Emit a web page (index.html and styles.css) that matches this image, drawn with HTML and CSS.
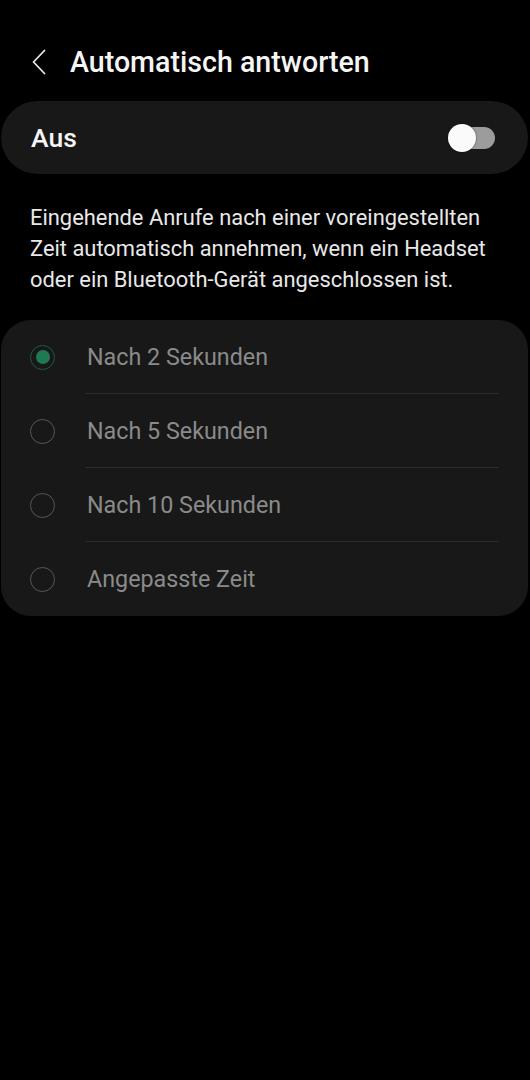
FILE: index.html
```html
<!DOCTYPE html>
<html lang="de">
<head>
<meta charset="utf-8">
<title>Automatisch antworten</title>
<link rel="stylesheet" href="styles.css">
</head>
<body>
<header class="appbar">
  <span class="back" aria-label="Zurück">
    <svg width="14" height="26" viewBox="0 0 14 26"><path d="M12.5 1.5 L1.5 13 L12.5 24.5" fill="none" stroke="#e6e6e6" stroke-width="1.8" stroke-linecap="round" stroke-linejoin="round"/></svg>
  </span>
  <h1 class="title">Automatisch antworten</h1>
</header>

<section class="switch-card">
  <span class="switch-label">Aus</span>
  <span class="toggle"><span class="knob"></span></span>
</section>

<p class="desc">Eingehende Anrufe nach einer voreingestellten Zeit automatisch annehmen, wenn ein Headset oder ein Bluetooth-Gerät angeschlossen ist.</p>

<section class="options">
  <div class="option">
    <span class="radio checked"><span class="dot"></span></span>
    <span class="opt-label">Nach 2 Sekunden</span>
  </div>
  <div class="option">
    <span class="radio"></span>
    <span class="opt-label">Nach 5 Sekunden</span>
  </div>
  <div class="option">
    <span class="radio"></span>
    <span class="opt-label">Nach 10 Sekunden</span>
  </div>
  <div class="option last">
    <span class="radio"></span>
    <span class="opt-label">Angepasste Zeit</span>
  </div>
</section>
</body>
</html>
```
FILE: styles.css
```css
* { box-sizing: border-box; }
html, body { margin: 0; padding: 0; background: #000; }
body {
  font-family: Roboto, "Noto Sans", "Liberation Sans", sans-serif;
  color: #f2f2f2;
  width: 530px;
  min-height: 1080px;
}
.appbar {
  display: flex;
  align-items: center;
  height: 76px;
  margin-top: 24px;
  padding-left: 32px;
}
.back { display: flex; width: 14px; height: 26px; }
.title {
  margin: 0 0 0 24px;
  font-size: 28.6px;
  font-weight: 500;
  color: #f5f5f5;
  letter-spacing: 0;
}
.switch-card {
  display: flex;
  align-items: center;
  justify-content: space-between;
  height: 73px;
  margin: 1px 2px 0 1px;
  padding: 0 33px 0 30px;
  background: #181818;
  border-radius: 37px;
}
.switch-label {
  font-size: 26.5px;
  font-weight: 500;
  color: #f5f5f5;
}
.toggle {
  position: relative;
  width: 46px;
  height: 22px;
  border-radius: 11px;
  background: #9c9c9c;
}
.knob {
  position: absolute;
  left: -1px;
  top: -3px;
  width: 28px;
  height: 28px;
  border-radius: 50%;
  background: #fafafa;
  box-shadow: 0 0 2px rgba(0,0,0,0.6);
}
.desc {
  margin: 28px 0 0;
  padding: 0 30px;
  font-size: 21.9px;
  line-height: 31px;
  color: #e8e8e8;
}
.options {
  margin: 25px 2px 0 1px;
  background: #181818;
  border-radius: 30px;
}
.option {
  display: flex;
  align-items: center;
  height: 74px;
}
.radio {
  display: flex;
  align-items: center;
  justify-content: center;
  flex: none;
  width: 25px;
  height: 25px;
  margin-left: 29px;
  border: 1.5px solid #575757;
  border-radius: 50%;
}
.radio.checked { border-color: #1e5a3f; }
.dot {
  width: 14px;
  height: 14px;
  border-radius: 50%;
  background: #1f7a53;
}
.opt-label {
  display: flex;
  align-items: center;
  align-self: stretch;
  flex: 1;
  margin: 0 29px 0 30px;
  padding-left: 2px;
  border-bottom: 1px solid #2c2c2c;
  font-size: 23.3px;
  color: #8a8a8a;
}
.option.last .opt-label { border-bottom: none; }
```
